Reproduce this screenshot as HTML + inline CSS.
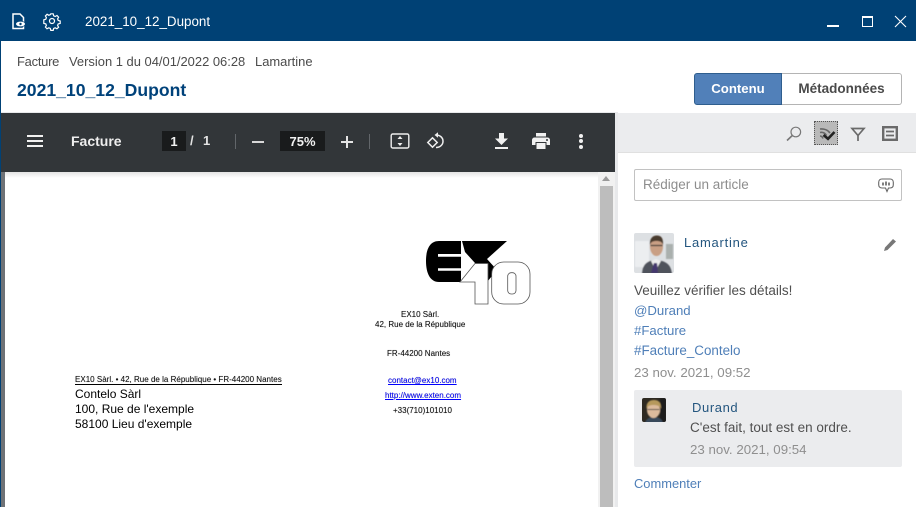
<!DOCTYPE html>
<html lang="fr"><head><meta charset="utf-8"><title>2021_10_12_Dupont</title>
<style>
html,body{margin:0;padding:0;width:916px;height:507px;overflow:hidden;background:#fff}
body{position:relative;font-family:"Liberation Sans",sans-serif;color:#444}
.a{position:absolute;white-space:nowrap}
svg{position:absolute;overflow:visible}
.pdf{font-size:8px;color:#111;line-height:10px;text-shadow:0 0 .6px rgba(0,0,0,.45)}
.link{color:#4f7fb8}
.nm{color:#24567f}
.dt{color:#8f8f8f}
</style></head><body>
<div class="a" style="left:0;top:0;width:916px;height:41px;background:#004175"></div>
<div class="a" style="left:0;top:41px;width:1px;height:466px;background:#004175"></div>

<svg style="left:12px;top:13px" width="14" height="17" viewBox="0 0 14 17" fill="none" stroke="#fff" stroke-width="1.5"><path d="M1 1h7l3.500 3.500V15.500H1z"/><ellipse cx="8.500" cy="11" rx="5" ry="3.200" fill="#004175" stroke="none"/><ellipse cx="8.500" cy="11" rx="4.500" ry="2.400" fill="#fff" stroke="none"/><circle cx="8.500" cy="11" r="1.200" fill="#004175" stroke="none"/></svg>
<svg style="left:44px;top:13px" width="16" height="16" viewBox="0 0 16 16" fill="none" stroke="#fff" stroke-width="1.200"><path d="M6.800.8h2.400l.5 2 1.500.7 1.800-1 1.600 1.700-1 1.700.6 1.500 2 .6v2.400l-2 .5-.6 1.500 1 1.800-1.700 1.600-1.700-1-1.500.6-.5 2H6.800l-.5-2-1.500-.6-1.800 1-1.600-1.700 1-1.700-.6-1.500-2-.5V6.800l2-.6.6-1.500-1-1.700 1.700-1.700 1.700 1 1.500-.6z"/><circle cx="8" cy="8" r="2.500"/></svg>
<div class="a" style="left:85px;top:13px;font-size:13.400px;line-height:17px;color:#fff">2021_10_12_Dupont</div>

<div class="a" style="left:827px;top:25px;width:12px;height:2px;background:#fff"></div>
<div class="a" style="left:862px;top:16px;width:9px;height:8px;border:1px solid #fff;border-top-width:2px"></div>
<svg style="left:894px;top:15px" width="13" height="13" viewBox="0 0 13 13" stroke="#fff" stroke-width="1.100"><path d="M1 1l11 11M12 1L1 12"/></svg>

<div class="a" style="left:17px;top:54px;font-size:12.950px;letter-spacing:-.25px;line-height:15px;color:#4b4b4b">Facture</div>
<div class="a" style="left:69px;top:54px;font-size:12.950px;line-height:15px;color:#4b4b4b">Version 1 du 04/01/2022 06:28</div>
<div class="a" style="left:255px;top:54px;font-size:12.950px;line-height:15px;color:#4b4b4b">Lamartine</div>
<div class="a" style="left:17px;top:79px;font-size:17.600px;line-height:22px;font-weight:bold;color:#00427a">2021_10_12_Dupont</div>

<div class="a" style="left:694px;top:73px;width:88px;height:32px;box-sizing:border-box;background:#5180b9;border:1px solid #2f5e8e;border-radius:3px 0 0 3px;color:#fff;font-weight:bold;font-size:13.200px;line-height:29px;text-align:center">Contenu</div>
<div class="a" style="left:782px;top:73px;width:120px;height:32px;box-sizing:border-box;background:#fff;border:1px solid #b4b4b4;border-left:0;border-radius:0 3px 3px 0;color:#4a4a4a;font-weight:bold;font-size:13.500px;line-height:29px;text-align:center">Métadonnées</div>

<div class="a" style="left:1px;top:112px;width:617px;height:395px;background:#e8e9eb"></div>
<div class="a" style="left:1px;top:113px;width:614px;height:59px;background:#323639"></div>
<div class="a" style="left:1px;top:172px;width:4px;height:335px;background:#6f7276"></div>
<div class="a" style="left:5px;top:172px;width:593px;height:335px;background:#fff"></div>
<div class="a" style="left:5px;top:172px;width:593px;height:6px;background:linear-gradient(#e3e3e3,#fff)"></div>

<div class="a" style="left:27px;top:135px;width:16px;height:2px;background:#f1f1f1"></div>
<div class="a" style="left:27px;top:140px;width:16px;height:2px;background:#f1f1f1"></div>
<div class="a" style="left:27px;top:145px;width:16px;height:2px;background:#f1f1f1"></div>
<div class="a" style="left:71px;top:132px;font-size:14px;line-height:18px;font-weight:bold;color:#eee">Facture</div>
<div class="a" style="left:162px;top:131px;width:24px;height:20px;background:#191b1c;color:#f1f1f1;font-size:13px;font-weight:bold;line-height:21px;text-align:center">1</div>
<div class="a" style="left:190px;top:132px;font-size:13px;font-weight:bold;line-height:17px;color:#e4e4e4">/</div>
<div class="a" style="left:203px;top:132px;font-size:13px;font-weight:bold;line-height:17px;color:#e4e4e4">1</div>
<div class="a" style="left:235px;top:134px;width:1px;height:15px;background:#62666a"></div>
<div class="a" style="left:252px;top:141px;width:12px;height:2px;background:#d8d8d8"></div>
<div class="a" style="left:280px;top:131px;width:45px;height:20px;background:#191b1c;color:#f1f1f1;font-size:13px;font-weight:bold;line-height:21px;text-align:center">75%</div>
<div class="a" style="left:341px;top:141px;width:12px;height:2px;background:#e4e4e4"></div>
<div class="a" style="left:346px;top:136px;width:2px;height:12px;background:#e4e4e4"></div>
<div class="a" style="left:369px;top:134px;width:1px;height:15px;background:#62666a"></div>
<svg style="left:390px;top:133px" width="20" height="16" viewBox="0 0 20 16" fill="none" stroke="#eee" stroke-width="1.400"><rect x="1.200" y="1" width="17.600" height="14" rx="1.500"/><path d="M10 3l2.500 3h-5zM10 13l2.500-3h-5z" fill="#eee" stroke="none"/></svg>
<svg style="left:426px;top:132px" width="20" height="18" viewBox="0 0 20 18" fill="none" stroke="#eee" stroke-width="1.500"><path d="M10 3c4 0 7 2.600 7 6.200S14 15.500 10 15.500"/><path d="M12 .2L8.500 3 12 5.800z" fill="#eee" stroke="none"/><path d="M6.500 5.800L1.800 10.500l4.700 4.700 4.700-4.700z"/></svg>
<svg style="left:494px;top:133px" width="15" height="16" viewBox="0 0 15 16" fill="#f1f1f1"><path d="M5 0h5v5.500h4L7.500 12 1 5.500h4zM1 14h13v2H1z"/></svg>
<svg style="left:532px;top:133px" width="18" height="16" viewBox="0 0 18 16" fill="#f1f1f1"><path d="M4 0h10v3.500H4zM2.500 4.500h13A2.500 2.500 0 0 1 18 7v5h-3.500V9h-11v3H0V7a2.500 2.500 0 0 1 2.500-2.500zM4.500 10h9v6h-9z"/><circle cx="15" cy="7" r="1" fill="#323639"/></svg>
<div class="a" style="left:579px;top:134px;width:4px;height:4px;border-radius:2px;background:#f1f1f1"></div>
<div class="a" style="left:579px;top:139px;width:4px;height:4px;border-radius:2px;background:#f1f1f1"></div>
<div class="a" style="left:579px;top:145px;width:4px;height:4px;border-radius:2px;background:#f1f1f1"></div>

<div class="a" style="left:598px;top:172px;width:17px;height:335px;background:#f1f1f1"></div>
<div class="a" style="left:600px;top:186px;width:13px;height:321px;background:#bdbdbd"></div>
<div class="a" style="left:602px;top:176px;width:0;height:0;border:4px solid transparent;border-top:0;border-bottom:5px solid #9a9a9a"></div>

<svg style="left:425px;top:240px" width="106" height="66" viewBox="0 0 106 66">
<path d="M14 1H36V14H13V16.700H36V28.300H13V30.700H36V42H14C5 42 1 33 1 21S5 1 14 1Z" fill="#000"/>
<path d="M37 1H82L62 19L72 30L62 42H40L50 23L40 12Z" fill="#000"/>
<path d="M50 23.500H63V64H50V42H35Z" fill="#fff" stroke="#555" stroke-width=".8"/>
<rect x="66.700" y="22" width="38.300" height="42" rx="12" fill="#fff" stroke="#555" stroke-width=".8"/>
<rect x="82.700" y="32.700" width="8.300" height="21.300" rx="3.500" fill="#fff" stroke="#555" stroke-width=".8"/>
</svg>

<div class="a pdf" style="left:401px;top:310px">EX10 Sàrl.</div>
<div class="a pdf" style="left:375px;top:320px">42, Rue de la République</div>
<div class="a pdf" style="left:387px;top:349px">FR-44200 Nantes</div>
<div class="a pdf" style="left:388px;top:376px;color:#00f;text-decoration:underline">contact@ex10.com</div>
<div class="a pdf" style="left:385px;top:391px;color:#00f;text-decoration:underline">http://www.exten.com</div>
<div class="a pdf" style="left:393px;top:406px">+33(710)101010</div>
<div class="a pdf" style="left:75px;top:376px;border-bottom:1px solid #000;line-height:8px;letter-spacing:.01px">EX10 Sàrl. • 42, Rue de la République • FR-44200 Nantes</div>
<div class="a" style="left:75px;top:387px;font-size:12px;line-height:15px;color:#000">Contelo Sàrl</div>
<div class="a" style="left:75px;top:402px;font-size:12px;line-height:15px;color:#000">100, Rue de l'exemple</div>
<div class="a" style="left:75px;top:417px;font-size:12px;line-height:15px;color:#000">58100 Lieu d'exemple</div>

<div class="a" style="left:618px;top:113px;width:298px;height:39px;background:#ebecee;border-bottom:1px solid #e0e0e0"></div>
<svg style="left:786px;top:126px" width="16" height="16" viewBox="0 0 16 16" fill="none" stroke="#777" stroke-width="1.200"><circle cx="9.800" cy="6" r="4.800"/><path d="M6.300 9.500L1 14.500" stroke-width="1.600"/></svg>
<div class="a" style="left:814px;top:121px;width:24px;height:24px;box-sizing:border-box;background:#b9b9b9;border:1px dotted #555"></div>
<svg style="left:819px;top:127px" width="16" height="13" viewBox="0 0 16 13" fill="none"><path d="M1 2c4-.5 8 1 10 4M1 5.500c2.500-.5 5 .5 6.500 3M1 9c1.500 0 2.500 1 3 2.500" stroke="#666" stroke-width="1.600"/><path d="M4.500 8l4.500 3.800L15.500 5" stroke="#222" stroke-width="2.600"/></svg>
<svg style="left:851px;top:127px" width="14" height="14" viewBox="0 0 14 14" fill="none" stroke="#6a6a6a" stroke-width="1.700"><path d="M1 1.500h12L7 8.500zM7 8v6"/></svg>
<svg style="left:882px;top:126px" width="16" height="15" viewBox="0 0 16 15" fill="none" stroke="#6a6a6a" stroke-width="2.400"><rect x="1.200" y="1.200" width="13.600" height="12.600"/><path d="M4 5.500h8M4 9.500h8" stroke-width="1.800"/></svg>

<div class="a" style="left:634px;top:169px;width:268px;height:32px;box-sizing:border-box;border:1px solid #c2c2c2;border-radius:2px;background:#fff"></div>
<div class="a" style="left:643px;top:176px;font-size:13.500px;line-height:17px;color:#8d8d8d">Rédiger un article</div>
<svg style="left:878px;top:178px" width="16" height="15" viewBox="0 0 16 15" fill="none"><path d="M4 1h8c2 0 3.300 1.300 3.300 3.300v2.500c0 2-1.300 3.200-3.300 3.200h-1.500l-1.500 3.500-1.500-3.500H4C2 10 .7 8.800.7 6.800V4.300C.7 2.300 2 1 4 1z" stroke="#666" stroke-width="1.100"/><path d="M5 4.500v3M8 3.500v4M11 4.500v3" stroke="#555" stroke-width="1.500"/></svg>

<svg style="left:634px;top:233px" width="40" height="40" viewBox="0 0 40 40"><defs><filter id="b1"><feGaussianBlur stdDeviation=".5"/></filter><clipPath id="c1"><rect width="40" height="40" rx="2"/></clipPath></defs><g clip-path="url(#c1)"><rect width="40" height="40" fill="#dde0e3"/><g filter="url(#b1)"><rect x="1" y="8" width="14" height="26" fill="#eceef0"/><rect x="32" y="11" width="7" height="15" fill="#aab0ae"/><path d="M8 41c.5-8 3-11 8-13l6-1 6 1c6 2 9 5 10 13z" fill="#50535c"/><path d="M17 28l5-2 5 2-4 7-2 1z" fill="#eee"/><path d="M20 30h3l1 10h-7z" fill="#45386e"/><ellipse cx="22.500" cy="13.500" rx="6.500" ry="9.500" fill="#c99f84"/><path d="M16 12c-.5-7 3-9.500 7-9.500s6.500 2.500 6 9.500c-1-3-2.500-4-6.500-4s-5.500 1-6.500 4z" fill="#4a3a2e"/><path d="M16.500 12.500h12" stroke="#333" stroke-width="1.200"/></g></g></svg>
<div class="a nm" style="left:684px;top:234px;font-size:13px;line-height:17px;letter-spacing:.75px">Lamartine</div>
<svg style="left:884px;top:238px" width="13" height="13" viewBox="0 0 13 13" fill="#777"><path d="M0 13l1-3.500 8-8.500 3 2.500-8.500 8.500z"/></svg>

<div class="a" style="left:634px;top:282px;font-size:13.500px;line-height:17px;color:#505050">Veuillez vérifier les détails!</div>
<div class="a link" style="left:634px;top:302px;font-size:13.200px;line-height:17px">@Durand</div>
<div class="a link" style="left:634px;top:322px;font-size:13.200px;line-height:17px">#Facture</div>
<div class="a link" style="left:634px;top:342px;font-size:13.400px;line-height:17px">#Facture_Contelo</div>
<div class="a dt" style="left:634px;top:364px;font-size:13.300px;line-height:17px">23 nov. 2021, 09:52</div>

<div class="a" style="left:634px;top:390px;width:268px;height:77px;background:#ebecee;border-radius:2px"></div>
<svg style="left:642px;top:398px" width="24" height="24" viewBox="0 0 24 24"><defs><clipPath id="c2"><rect width="24" height="24" rx="2"/></clipPath></defs><g clip-path="url(#c2)"><rect width="24" height="24" fill="#2e2a22"/><g filter="url(#b1)"><rect x="18" width="6" height="24" fill="#1a1a1a"/><path d="M3 25c1-4 4-6 9-6s8 2 9 6z" fill="#39495a"/><ellipse cx="11.500" cy="12" rx="6.500" ry="8" fill="#dcbb9c"/><path d="M4.500 11C4 4 8 2 12 2s7.500 2 7 9c-1-3-3.500-4-7.500-4s-6 1-7 4z" fill="#b6995c"/><path d="M5.500 11.500h12" stroke="#444" stroke-width="1"/></g></g></svg>
<div class="a nm" style="left:692px;top:399px;font-size:13px;line-height:17px;letter-spacing:.6px">Durand</div>
<div class="a" style="left:690px;top:419px;font-size:13.500px;line-height:17px;color:#505050">C'est fait, tout est en ordre.</div>
<div class="a dt" style="left:690px;top:441px;font-size:13.300px;line-height:17px">23 nov. 2021, 09:54</div>
<div class="a link" style="left:634px;top:475px;font-size:12.900px;line-height:17px">Commenter</div>
</body></html>
